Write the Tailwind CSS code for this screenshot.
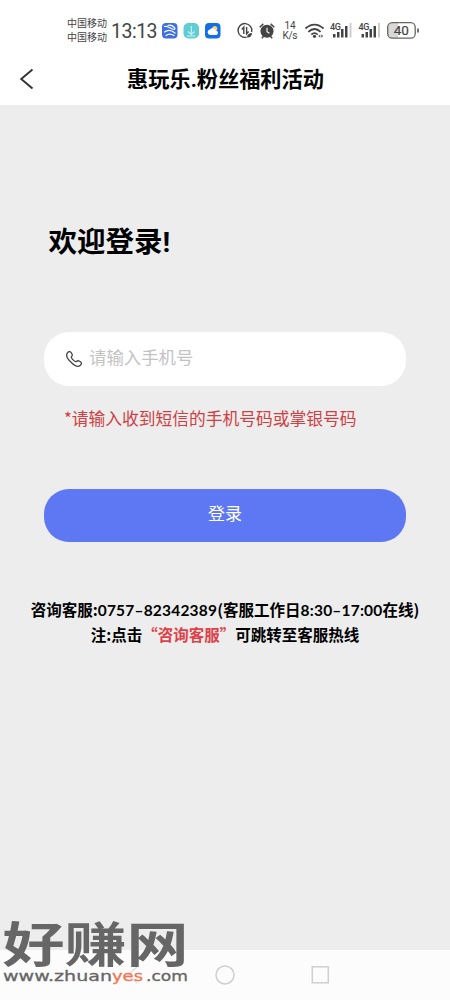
<!DOCTYPE html>
<html lang="zh-CN">
<head>
<meta charset="utf-8">
<meta name="viewport" content="width=device-width, initial-scale=1">
<title>惠玩乐.粉丝福利活动</title>
<script src="https://cdn.jsdelivr.net/npm/@tailwindcss/browser@4"></script>
</head>
<body class="bg-[#ededed] font-['Noto_Sans_CJK_SC',sans-serif] text-black">
<div class="relative flex h-[1000px] w-[450px] flex-col overflow-hidden">
  <!-- status bar -->
  <div class="flex h-[56px] shrink-0 items-start bg-white pl-[67px] pt-[16px] text-[#444]">
    <div class="w-[44px] whitespace-nowrap text-[10px] leading-[14px]"><div>中国移动</div><div>中国移动</div></div>
    <div class="w-[51px] whitespace-nowrap pt-[1px] font-['Roboto','Noto_Sans_CJK_SC',sans-serif] text-[19.500px] leading-[30px] tracking-[-0.500px]">13:13</div>
    <svg class="h-[30px] w-[260px]" viewBox="162 16 260 30" fill="none">
      <rect x="162" y="23" width="15.500" height="15.500" rx="4" fill="#3d6fe0"/>
      <path d="M164.500 26.500c4-1 6 3 10 3M168 25.500c3-1 6 1 7 3M164.500 32c4-3 7-2 10.500 1M166 35.500c3-2.500 5-2 8 0" stroke="#fff" stroke-width="1.200" stroke-linecap="round"/>
      <rect x="183.500" y="23" width="15.500" height="15.500" rx="5" fill="#5fcdd3"/>
      <path d="M191.300 26v8M188 31.500l3.300 3 3.300-3M187 36h8.500" stroke="#c9f3f2" stroke-width="1.100"/>
      <rect x="205" y="23" width="15.500" height="15.500" rx="4" fill="#1170e8"/>
      <circle cx="214.800" cy="28.500" r="2.500" fill="#ffd36a"/>
      <path d="M210 35a2.800 2.800 0 0 1-.2-5.500 3.700 3.700 0 0 1 6.200 1 2.300 2.300 0 0 1 .2 4.500z" fill="#fff"/>
      <path d="M246.500 37.200a6.900 6.900 0 1 1 5.200-5.200" stroke="#444" stroke-width="1.400"/>
      <path d="M243.800 34v-6.800l-2 2.300M246.600 27v6.800l2-2.300" stroke="#444" stroke-width="1.400"/>
      <path d="M247 37.500c0-3 2-4.500 5-4.500 0 3-2 5-5 4.500z" fill="#444"/>
      <circle cx="267" cy="31.200" r="6.500" fill="#444"/>
      <path d="M259.700 27.200l3.600-3.300M274.300 27.200l-3.600-3.300M261.800 38.200l2-2.200M272.200 38.200l-2-2.200" stroke="#444" stroke-width="1.500"/>
      <path d="M267 27.800v3.800l2.400 1.600" stroke="#fff" stroke-width="1.100"/>
      <g fill="#444" font-family="Roboto, sans-serif" text-anchor="middle" font-size="10"><text x="290" y="29.300">14</text><text x="290" y="39" textLength="15">K/s</text></g>
      <path d="M305.500 28.500c5.500-5.300 12.500-5.300 18 0M308.300 31.800c4-3.600 8.500-3.600 12.300 0M311.300 34.600c2-1.800 4.400-1.800 6.400 0" stroke="#444" stroke-width="1.800"/>
      <circle cx="314.500" cy="36.300" r="1.600" fill="#444"/><path d="M320.300 34.400l-2 1.700 2 1.700zM321.300 34.400l2 1.700-2 1.700z" fill="#555"/>
      <g fill="#444"><text x="330" y="30" font-family="Roboto, sans-serif" font-size="9" font-weight="500" textLength="11">4G</text>
      <path d="M333 34h2.500v3.500H333zM337 32h2.500v5.500H337zM341 29h2.500v8.500H341zM345 26h2.500v11.500H345z"/><path d="M349.500 23h2v14.500h-2z" fill="#ccc"/>
      <text x="358.500" y="30" font-family="Roboto, sans-serif" font-size="9" font-weight="500" textLength="11">4G</text>
      <path d="M361.500 34h2.500v3.500h-2.500zM365.500 32h2.500v5.500h-2.500zM369.500 29h2.500v8.500h-2.500zM373.500 26h2.500v11.500h-2.500z"/><path d="M378 23h2v14.500h-2z" fill="#ccc"/></g>
      <rect x="387.700" y="22.700" width="27.500" height="15.500" rx="4.500" fill="#fff"/>
      <path d="M392 22.700h6v15.500h-6a4.300 4.300 0 0 1-4.300-4.300V27a4.300 4.300 0 0 1 4.300-4.300z" fill="#d8d8d8"/>
      <rect x="387.700" y="22.700" width="27.500" height="15.500" rx="4.500" stroke="#666" stroke-width="1.300"/>
      <path d="M418 28.500v4" stroke="#444" stroke-width="1.500"/>
      <text x="401.300" y="35.300" fill="#444" font-family="Roboto, sans-serif" font-size="13.500" font-weight="400" stroke="#444" stroke-width=".2" text-anchor="middle">40</text>
    </svg>
  </div>
  <!-- title bar -->
  <header class="flex h-[49px] shrink-0 items-center bg-white">
    <svg class="ml-[19px] mb-[3px] h-[22px] w-[16px] shrink-0" viewBox="0 0 16 22" fill="none"><path d="M13.500 1.500L2.200 11l11.300 9.500" stroke="#333" stroke-width="1.900"/></svg>
    <h1 class="mr-[34px] mb-[5px] flex-1 whitespace-nowrap text-center text-[21.200px] leading-[30px] font-bold">惠玩乐<span class="font-['Roboto'] leading-none">.</span>粉丝福利活动</h1>
  </header>
  <main class="flex flex-1 flex-col bg-[#ededed] px-[44px] pt-[114px]">
    <h2 class="ml-[4.500px] h-[42px] whitespace-nowrap text-[28.500px] leading-[42px] font-bold">欢迎登录<span class="font-['Roboto'] leading-none">!</span></h2>
    <label class="mt-[71px] flex h-[54px] items-center rounded-[25px] bg-white pl-[21px]">
      <svg class="h-[18px] w-[18px]" viewBox="0 0 18 18" fill="none"><path d="M2.300 3.100C3.300 1.700 5 1 6 2.300L7 4c.7 1.200.2 2-.7 2.900-.4 1.200 3.500 5.100 4.900 4.800.9-.9 1.700-1.400 2.900-.7l1.600 1c1.300.9.700 2.500-.6 3.600-1.900 1.600-5.700.1-9-3.300C2.600 9 .8 5.200 2.300 3.100z" stroke="#444" stroke-width="1.300"/></svg>
      <span class="mb-[4px] ml-[6px] whitespace-nowrap text-[17.400px] leading-[26px] text-[#c3c3c3]">请输入手机号</span>
    </label>
    <p class="mt-[19px] ml-[20px] h-[26px] whitespace-nowrap text-[16.750px] leading-[26px] text-[#cf3f43]">*请输入收到短信的手机号码或掌银号码</p>
    <button class="mt-[58px] flex h-[53px] shrink-0 justify-center rounded-[25px] bg-[#5e77f3] pt-[11px] text-[17px] leading-[26px] text-white">登录</button>
    <div class="-mx-[40px] mt-[55px] text-center text-[15.500px] leading-[25px] font-bold whitespace-nowrap">
      <p class="h-[25px]">咨询客服:<span class="font-['Lato'] leading-none tracking-[0.200px]">0757–82342389</span>(客服工作日<span class="font-['Lato'] leading-none tracking-[0.200px]">8:30–17:00</span>在线)</p>
      <p class="h-[25px]">注:点击<span class="text-[#df4148]">“咨询客服”</span>可跳转至客服热线</p>
    </div>
  </main>
  <!-- system navigation -->
  <nav class="flex h-[50px] shrink-0 items-center bg-[#fcfcfc]">
    <svg class="h-[50px] w-[450px]" viewBox="0 0 450 50" fill="none" stroke="#cfcfcf" stroke-width="1.500"><path d="M137 17l-9 8 9 8" stroke="#dedede"/><circle cx="225" cy="25" r="9"/><rect x="312.300" y="16.800" width="16" height="16"/></svg>
  </nav>
  <!-- watermark -->
  <svg class="absolute left-0 top-[890px] h-[110px] w-[200px]" viewBox="0 890 200 110">
    <text transform="translate(2.500 962) scale(1 .78)" font-size="61" font-weight="700" fill="#666" textLength="186" lengthAdjust="spacingAndGlyphs">好赚网</text>
    <g font-family="DejaVu Sans" font-size="14" fill="#666" stroke="#666" stroke-width=".3">
      <text x="3" y="981" textLength="109" lengthAdjust="spacingAndGlyphs">www.zhuan</text>
      <text x="112" y="981" textLength="31" lengthAdjust="spacingAndGlyphs" fill="#f2764f" stroke="#f2764f">yes</text>
      <text x="146" y="981" textLength="42" lengthAdjust="spacingAndGlyphs">.com</text>
    </g>
  </svg>
</div>
</body>
</html>
